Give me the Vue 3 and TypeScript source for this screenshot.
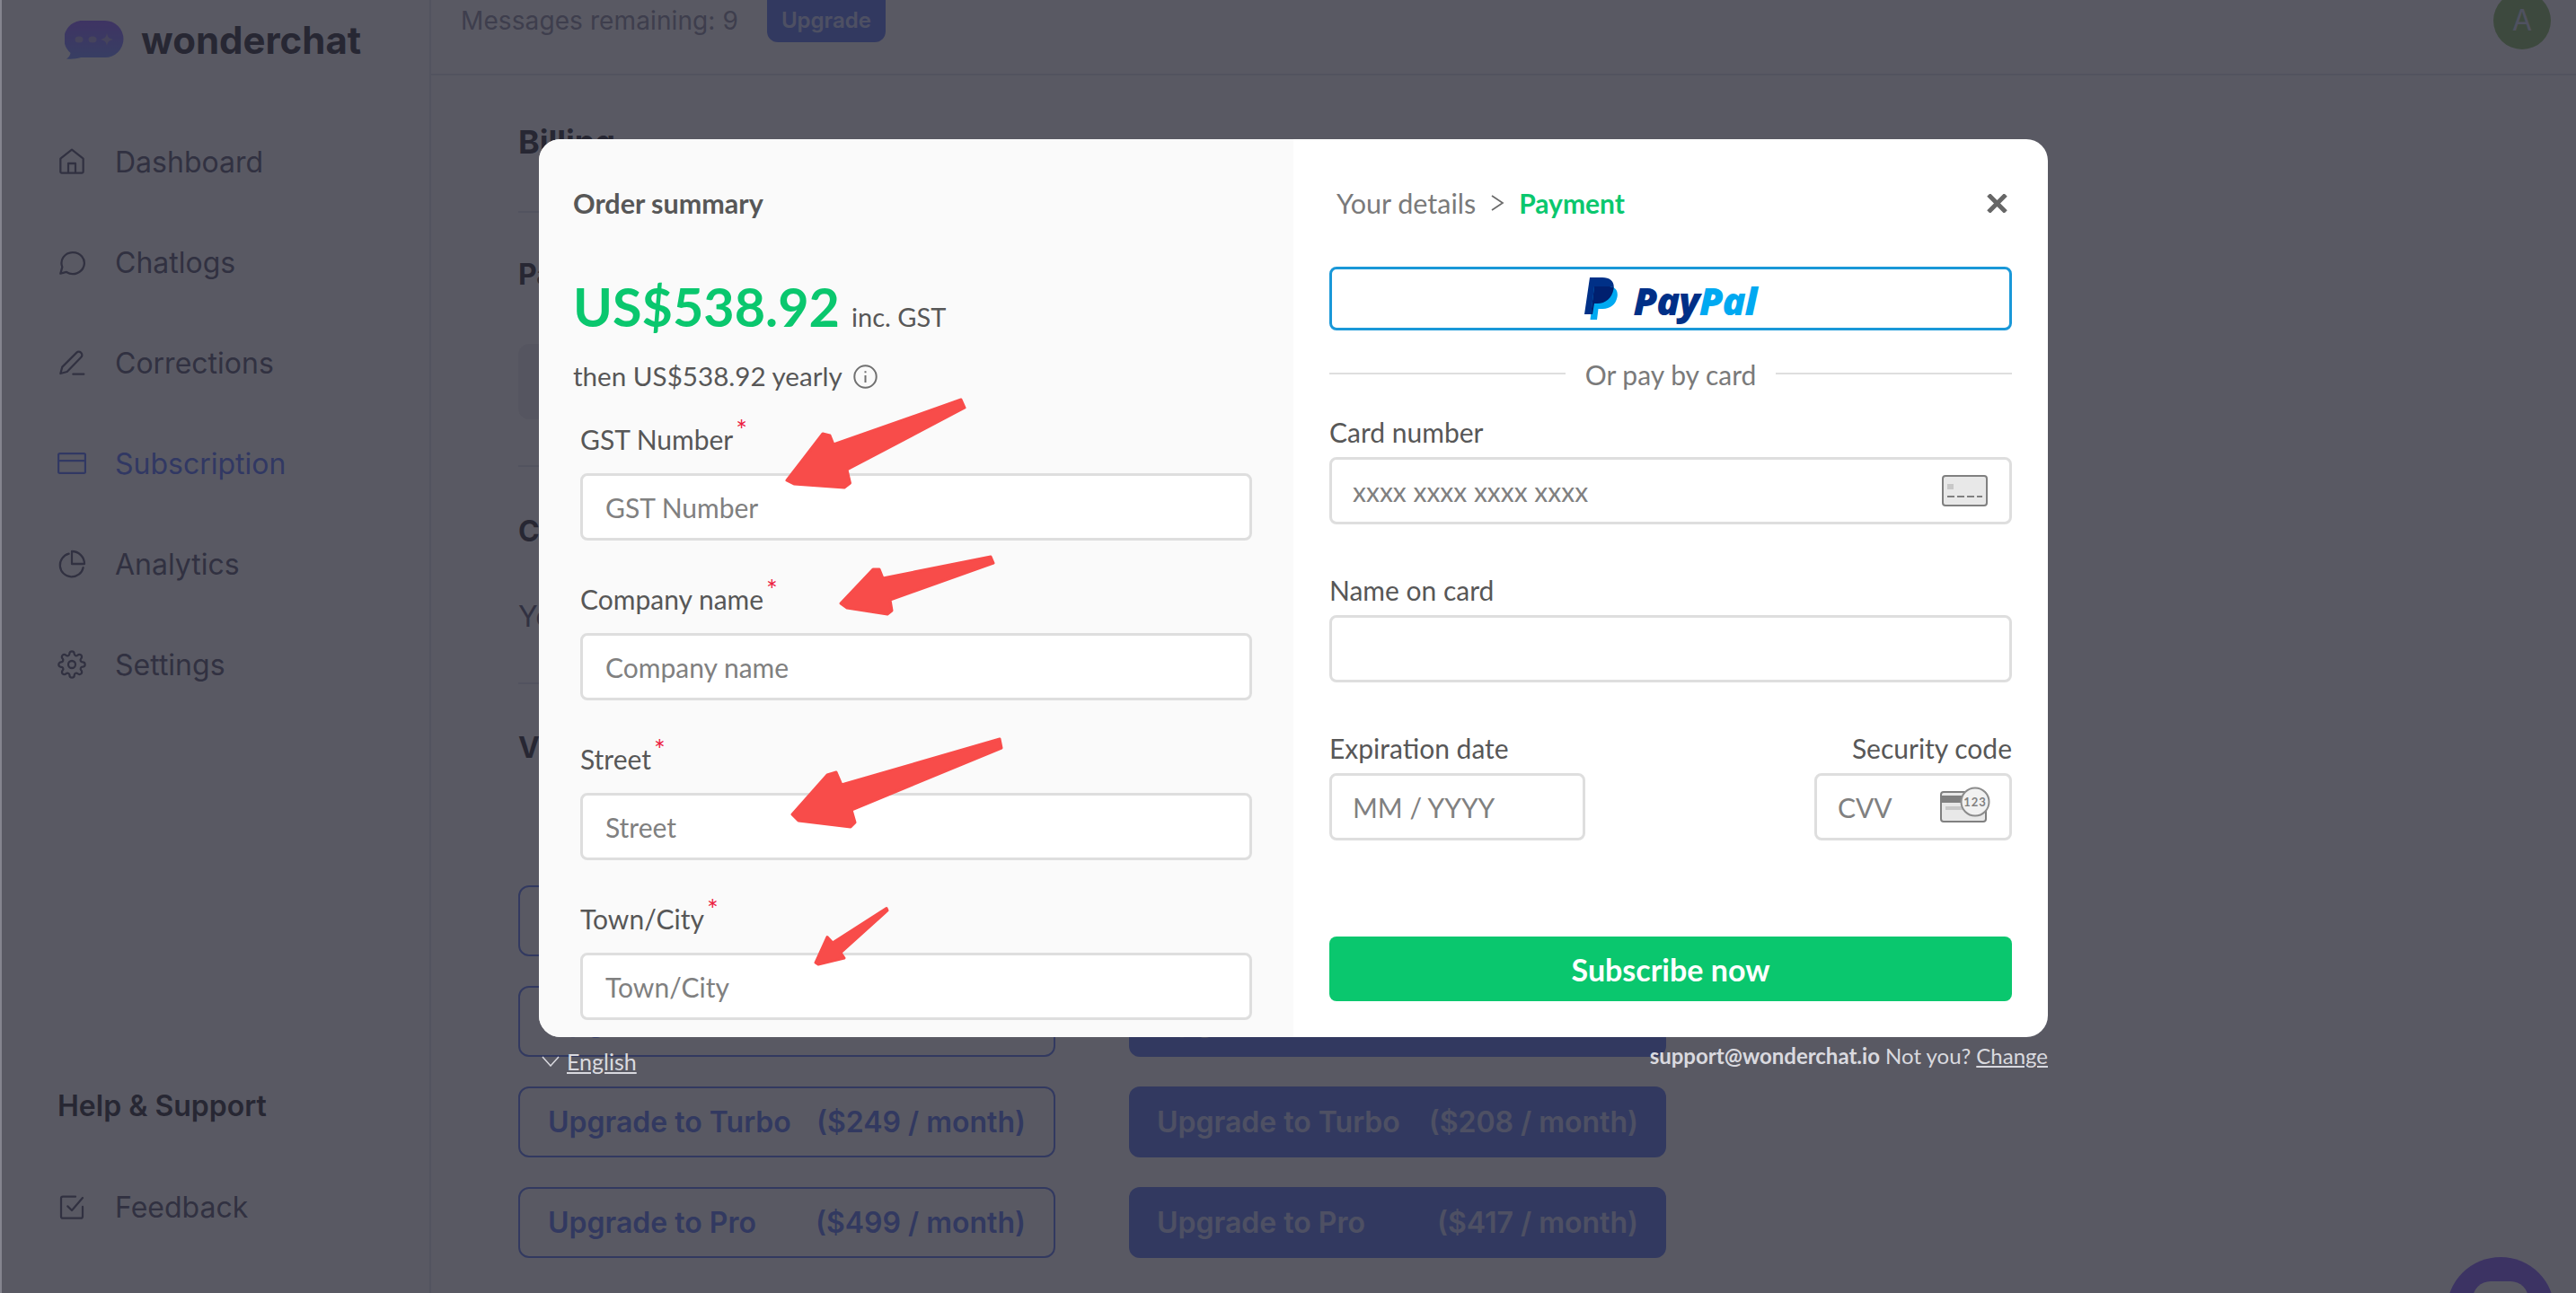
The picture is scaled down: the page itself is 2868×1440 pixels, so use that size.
<template>
  <div class="page">
    <aside class="sidebar">
      <div class="brand">
        <svg class="brand-mark" viewBox="0 0 66 43" width="66" height="43">
          <defs>
            <linearGradient id="brand-fill" x1="0" y1="0" x2="0" y2="1">
              <stop offset="0" stop-color="#a681ff" />
              <stop offset="1" stop-color="#8ea6ff" />
            </linearGradient>
          </defs>
          <path
            d="M22 0h23a20.5 20.5 0 0 1 0 41H18c-5 1.500-10 2-16 1.500 2.500-1.500 4-3.500 4.500-6.500A20.500 20.500 0 0 1 22 0z"
            fill="url(#brand-fill)"
          />
          <ellipse cx="16" cy="21" rx="4.500" ry="3.500" fill="#c0b8e6" />
          <ellipse cx="31" cy="21" rx="4.500" ry="3.500" fill="#c0b8e6" />
          <path d="M47 14c.8 4.500 2.500 6 7 7-4.500 1-6.200 2.500-7 7-.8-4.500-2.500-6-7-7 4.500-1 6.200-2.500 7-7z" fill="#c0b8e6" />
        </svg>
        <span class="brand-name">wonderchat</span>
      </div>

      <nav class="nav">
        <a v-for="item in navItems" :key="item.label" class="nav-item" :class="{ active: item.active }">
          <svg class="nav-icon" viewBox="0 0 24 24" width="32" height="32">
            <path :d="item.icon" />
            <circle v-if="item.label === 'Settings'" cx="12" cy="12" r="3" />
          </svg>
          <span>{{ item.label }}</span>
        </a>
      </nav>

      <div class="help">
        <h3>Help &amp; Support</h3>
        <a class="nav-item">
          <svg class="nav-icon" viewBox="0 0 24 24" width="32" height="32">
            <path d="M21 12v8a1.500 1.500 0 0 1-1.500 1.500h-15A1.500 1.500 0 0 1 3 20V5a1.500 1.500 0 0 1 1.500-1.500H15M8.500 11.500l3.500 3.500L21 4.500" />
          </svg>
          <span>Feedback</span>
        </a>
      </div>
    </aside>

    <div class="content">
      <header class="topbar">
        <span class="messages">Messages remaining: 9</span>
        <span class="upgrade-badge">Upgrade</span>
        <span class="avatar">A</span>
      </header>

      <main class="main">
        <h1 class="billing-title">Billing</h1>
        <hr class="billing-rule" />
        <h2 class="section-title">Payment method</h2>
        <div class="method-box"></div>
        <hr class="billing-rule method-rule" />
        <h2 class="section-title plan-title">Current plan</h2>
        <p class="plan-text">You are on the free plan</p>
        <hr class="billing-rule plan-rule" />
        <h2 class="section-title view-title">View plans</h2>

        <div class="plans">
          <template v-for="plan in plans" :key="plan.name">
            <button class="plan-button outline" type="button">
              <span>Upgrade to {{ plan.name }}</span><span>(${{ plan.monthly }} / month)</span>
            </button>
            <button class="plan-button solid" type="button">
              <span>Upgrade to {{ plan.name }}</span><span>(${{ plan.yearly }} / month)</span>
            </button>
          </template>
        </div>
      </main>
    </div>

    <div class="chat-launcher"><span class="chat-hole"></span></div>

    <div class="backdrop">
      <div class="checkout">
        <section class="modal">
          <div class="summary">
            <h2 class="summary-title">Order summary</h2>
            <div class="price-row">
              <span class="price">US$538.92</span>
              <span class="tax">inc. GST</span>
            </div>
            <p class="then-line">
              then US$538.92 yearly
              <svg class="info-icon" viewBox="0 0 27 27" width="27" height="27">
                <circle cx="13.500" cy="13.500" r="12.200" />
                <path d="M13.500 12v8M13.500 7.200v2" />
              </svg>
            </p>

            <div class="billing-fields">
              <label v-for="field in billingFields" :key="field" class="billing-field">
                <span class="field-label">{{ field }}<sup class="required">*</sup></span>
                <input class="text-input" type="text" :placeholder="field" />
              </label>
            </div>
          </div>

          <div class="payment">
            <div class="steps">
              <span class="step-done">Your details</span>
              <svg class="step-arrow" viewBox="0 0 16 18" width="16" height="18"><path d="M2 1l12 8-12 8" /></svg>
              <span class="step-current">Payment</span>
              <svg class="close" viewBox="0 0 23 21" width="23" height="21"><path d="M2 1l19 19M21 1L2 20" /></svg>
            </div>

            <button class="paypal" type="button">
              <svg viewBox="0 0 37 47" width="37" height="47">
                <defs>
                  <clipPath id="pp-back"><path :d="paypalBack" /></clipPath>
                </defs>
                <path :d="paypalBack" fill="#003087" />
                <path :d="paypalFront" fill="#00a9f1" />
                <path :d="paypalFront" fill="#00206f" clip-path="url(#pp-back)" />
              </svg>
              <span class="paypal-word"><span class="pay">Pay</span><span class="pal">Pal</span></span>
            </button>

            <div class="or-divider"><span>Or pay by card</span></div>

            <label class="card-field">
              <span class="field-label">Card number</span>
              <span class="input-wrap">
                <input class="text-input" type="text" placeholder="xxxx xxxx xxxx xxxx" />
                <svg class="card-icon" viewBox="0 0 51 35" width="51" height="35">
                  <rect x="1" y="1" width="49" height="33" rx="3" fill="#e8e8e8" stroke="#808080" stroke-width="2" />
                  <rect x="6" y="10" width="7" height="6" fill="#c8c8c8" />
                  <path d="M6 24h39" stroke="#808080" stroke-width="2" stroke-dasharray="8 3" />
                </svg>
              </span>
            </label>

            <label class="card-field">
              <span class="field-label">Name on card</span>
              <input class="text-input" type="text" />
            </label>

            <div class="card-row">
              <label class="card-field expiry">
                <span class="field-label">Expiration date</span>
                <input class="text-input" type="text" placeholder="MM / YYYY" />
              </label>
              <label class="card-field security">
                <span class="field-label">Security code</span>
                <span class="input-wrap">
                  <input class="text-input" type="text" placeholder="CVV" />
                  <svg class="cvv-icon" viewBox="0 0 56 40" width="56" height="40">
                    <rect x="1" y="6" width="50" height="33" rx="3" fill="#e8e8e8" stroke="#808080" stroke-width="2" />
                    <rect x="1" y="10" width="50" height="8" fill="#808080" />
                    <rect x="6" y="22" width="26" height="4" fill="#c8c8c8" />
                    <circle cx="39" cy="17" r="15.500" fill="#f1f1f1" stroke="#8c8c8c" stroke-width="2" />
                    <text x="39" y="21.500" text-anchor="middle" class="cvv-digits">123</text>
                  </svg>
                </span>
              </label>
            </div>

            <button class="subscribe" type="button">Subscribe now</button>
          </div>

          <svg class="annotations" viewBox="0 0 1680 1000" width="1680" height="1000">
            <polygon v-for="(arrow, i) in arrows" :key="i" :points="arrow" />
          </svg>
        </section>

        <div class="modal-footer">
          <span class="language">
            <svg viewBox="0 0 20 12" width="20" height="12"><path d="M1 1l9 10 9-10" /></svg>
            <u>English</u>
          </span>
          <span class="account"><b>support@wonderchat.io</b> Not you? <u>Change</u></span>
        </div>
      </div>
    </div>
  </div>
</template>

<script setup lang="ts">
const navItems = [
  { label: 'Dashboard', icon: 'M2.500 9.500 12 2l9.500 7.500v11a1 1 0 0 1-1 1h-17a1 1 0 0 1-1-1zM9 21.500v-8h6v8' },
  { label: 'Chatlogs', icon: 'M2.500 21.500l1.500-5.500A9.500 9 0 1 1 7.500 20.200z' },
  { label: 'Corrections', icon: 'M2.500 21l1.500-5.500L16 3.500a2.500 2.500 0 0 1 3.500 0l.3.300a2.500 2.500 0 0 1 0 3.500L8 19.500zM13 21.500h9' },
  { label: 'Subscription', icon: 'M1.800 3.800h20.400a1 1 0 0 1 1 1v14.400a1 1 0 0 1-1 1H1.800a1 1 0 0 1-1-1V4.800a1 1 0 0 1 1-1zM.8 9.800h22.400', active: true },
  { label: 'Analytics', icon: 'M9.500 3.500A9.800 9.800 0 1 0 21.500 15M12 1.500V12h10.500A10.500 10.500 0 0 0 12 1.500z' },
  {
    label: 'Settings',
    icon: 'M19.400 15a1.650 1.650 0 0 0 .33 1.820l.06.06a2 2 0 0 1 0 2.830 2 2 0 0 1-2.830 0l-.06-.06a1.650 1.650 0 0 0-1.820-.33 1.650 1.650 0 0 0-1 1.510V21a2 2 0 0 1-2 2 2 2 0 0 1-2-2v-.09A1.650 1.650 0 0 0 9 19.400a1.650 1.650 0 0 0-1.820.33l-.06.06a2 2 0 0 1-2.830 0 2 2 0 0 1 0-2.830l.06-.06a1.650 1.650 0 0 0 .33-1.820 1.650 1.650 0 0 0-1.510-1H3a2 2 0 0 1-2-2 2 2 0 0 1 2-2h.09A1.650 1.650 0 0 0 4.600 9a1.650 1.650 0 0 0-.33-1.820l-.06-.06a2 2 0 0 1 0-2.830 2 2 0 0 1 2.830 0l.06.06a1.650 1.650 0 0 0 1.820.33H9a1.650 1.650 0 0 0 1-1.510V3a2 2 0 0 1 2-2 2 2 0 0 1 2 2v.09a1.650 1.650 0 0 0 1 1.510 1.650 1.650 0 0 0 1.820-.33l.06-.06a2 2 0 0 1 2.830 0 2 2 0 0 1 0 2.830l-.06.06a1.650 1.650 0 0 0-.33 1.820V9a1.650 1.650 0 0 0 1.510 1H21a2 2 0 0 1 2 2 2 2 0 0 1-2 2h-.09a1.650 1.650 0 0 0-1.510 1z',
  },
];

const plans = [
  { name: 'Basic', monthly: 49, yearly: 41 },
  { name: 'Growth', monthly: 99, yearly: 83 },
  { name: 'Turbo', monthly: 249, yearly: 208 },
  { name: 'Pro', monthly: 499, yearly: 417 },
];

const billingFields = ['GST Number', 'Company name', 'Street', 'Town/City'];

const paypalBack = 'M6 0h14c9 0 14 5 12.500 13-1.800 10-9 16-18 16H11L9 41H0z';
const paypalFront = 'M11 10h15c8 0 12 4 10.500 12-1.500 8-8 13-16 13H15.500L14 47H6.500z';

// red hand-drawn arrows, in modal coordinates
const arrows = [
  '470,290 474,299 343,368 346.500,383 340,388 284,384 276,380 316,328 324,330 328,340',
  '503,465 506,472 391,513 393,525 388,529 343,522 336,517 372,479 379,479 383,489',
  '513,668 515,678 348,747 352,761 347,766 289,759 282,752 321,708 331,705 337,719',
  '387,856.500 388,859 336,906 340,912 311,919 308,917 321,888.500 327,895',
];
</script>

<style>
html,
body {
  margin: 0;
  overflow: hidden;
  background: #fff;
}
</style>

<style scoped>
.page {
  position: relative;
  display: flex;
  width: 2868px;
  height: 1440px;
  overflow: hidden;
  font-family: Inter, 'Noto Sans', sans-serif;
  color: #7a7a8c;
  background: #fff;
}

.sidebar {
  box-sizing: border-box;
  width: 480px;
  flex: none;
  display: flex;
  flex-direction: column;
  padding: 0 0 40px 64px;
  border-right: 2px solid #e8ebf0;
}

.brand {
  display: flex;
  align-items: center;
  height: 124px;
  margin-left: 8px;
  padding-bottom: 36px;
  box-sizing: border-box;
  gap: 19px;
}

.brand-mark {
  flex: none;
}

.brand-name {
  font-size: 42px;
  font-weight: 700;
  color: #595960;
}

.nav {
  display: flex;
  flex-direction: column;
}

.nav-item {
  display: flex;
  align-items: center;
  height: 112px;
  gap: 32px;
  font-size: 32px;
}

.nav-item.active {
  color: #7a92ff;
}

.nav-icon {
  flex: none;
  fill: none;
  stroke: currentColor;
  stroke-width: 1.700;
  stroke-linecap: round;
  stroke-linejoin: round;
}

.help {
  margin-top: auto;
}

.help h3 {
  margin: 0 0 28px;
  font-size: 32px;
  line-height: 56px;
  font-weight: 600;
  color: #595960;
}

.content {
  flex: 1;
  min-width: 0;
  display: flex;
  flex-direction: column;
}

.topbar {
  box-sizing: border-box;
  flex: none;
  display: flex;
  align-items: flex-start;
  height: 84px;
  padding: 0 28px 0 33px;
  border-bottom: 2px solid #e8ebf0;
}

.messages {
  font-size: 28px;
  line-height: 46px;
  letter-spacing: 0.1px;
  color: #a4a4b4;
}

.upgrade-badge {
  margin-left: 32px;
  height: 47px;
  padding: 0 16px;
  border-radius: 0 0 12px 12px;
  background: #7d95f3;
  color: #dbe2ff;
  font-size: 24px;
  font-weight: 600;
  line-height: 46px;
}

.avatar {
  margin: -9px 0 0 auto;
  width: 64px;
  height: 64px;
  border-radius: 50%;
  background: #a2ca82;
  color: #dee5f3;
  font-size: 32px;
  line-height: 64px;
  text-align: center;
}

.main {
  padding: 0 0 0 97px;
}

.billing-title {
  margin: 52px 0 0;
  font-size: 36px;
  line-height: 44px;
  font-weight: 700;
  color: #595960;
}

.billing-rule {
  margin: 0;
  width: 1400px;
  height: 2px;
  border: 0;
  background: #e8ebf0;
}

.billing-title + .billing-rule {
  margin-top: 55px;
}

.section-title {
  margin: 47px 0 0;
  font-size: 32px;
  line-height: 44px;
  font-weight: 700;
  color: #595960;
}

.method-box {
  width: 900px;
  height: 84px;
  margin-top: 55px;
  border-radius: 12px;
  background: #f2f2f3;
}

.method-rule {
  margin-top: 51px;
}

.plan-title {
  margin-top: 50px;
}

.plan-text {
  margin: 51px 0 0;
  font-size: 32px;
  line-height: 44px;
  color: #7a7a8c;
}

.plan-rule {
  margin-top: 51px;
}

.view-title {
  margin-top: 49px;
}

.plans {
  display: grid;
  grid-template-columns: 598px 598px;
  column-gap: 82px;
  row-gap: 33px;
  margin-top: 131px;
}

.plan-button {
  box-sizing: border-box;
  display: flex;
  justify-content: space-between;
  align-items: center;
  height: 79px;
  padding: 0 31px;
  border-radius: 12px;
  font-family: inherit;
  font-size: 32px;
  font-weight: 600;
  white-space: nowrap;
}

.plan-button.outline {
  border: 2px solid #7d95f3;
  background: #fff;
  color: #7d95f3;
}

.plan-button.solid {
  border: 0;
  background: #7d95f3;
  color: #dbe2ff;
}

.chat-launcher {
  position: absolute;
  left: 2724px;
  top: 1400px;
  width: 120px;
  height: 120px;
  border-radius: 50%;
  background: #9f80ff;
}

.chat-hole {
  position: absolute;
  left: 29px;
  top: 27px;
  width: 62px;
  height: 62px;
  border-radius: 20px;
  background: #fff;
}

.backdrop {
  box-sizing: border-box;
  position: absolute;
  inset: 0;
  padding: 155px 0 0 598px;
  border-left: 2px solid #85858f;
  background: rgba(19, 19, 33, 0.7);
}

.checkout {
  width: 1680px;
  font-family: Lato, 'Open Sans', sans-serif;
}

.modal {
  position: relative;
  display: flex;
  height: 1000px;
  overflow: hidden;
  border-radius: 24px;
  background: #fff;
}

.summary {
  box-sizing: border-box;
  width: 840px;
  flex: none;
  padding: 51px 46px 0 38px;
  background: #fafafa;
}

.summary-title {
  margin: 0;
  font-size: 30.500px;
  line-height: 40px;
  font-weight: 700;
  color: #575757;
}

.price-row {
  display: flex;
  align-items: baseline;
  gap: 13px;
  margin-top: 59px;
  line-height: 72px;
}

.price {
  font-size: 59.300px;
  font-weight: 700;
  color: #0ac76e;
}

.tax {
  font-size: 29px;
  color: #575757;
}

.then-line {
  display: flex;
  align-items: center;
  gap: 12px;
  margin: 10px 0 0;
  font-size: 29.600px;
  line-height: 40px;
  color: #575757;
}

.info-icon {
  fill: none;
  stroke: #707070;
  stroke-width: 2;
}

.billing-fields {
  display: flex;
  flex-direction: column;
  gap: 47px;
  margin: 32px 0 0 8px;
}

.billing-field {
  display: flex;
  flex-direction: column;
  gap: 20px;
}

.field-label {
  font-size: 30px;
  line-height: 36px;
  color: #575757;
}

.required {
  margin-left: 3px;
  font-size: 30px;
  line-height: 0;
  color: #ec1c3f;
}

.text-input {
  box-sizing: border-box;
  width: 100%;
  height: 75px;
  padding: 0 25px;
  border: 3px solid #dedede;
  border-radius: 8px;
  background: #fff;
  font-family: inherit;
  font-size: 30px;
  color: #575757;
  outline: none;
}

.text-input::placeholder {
  color: #808080;
  opacity: 1;
}

.payment {
  box-sizing: border-box;
  width: 840px;
  flex: none;
  padding: 51px 40px 0;
}

.payment .text-input {
  padding: 0 23px;
}

.steps {
  display: flex;
  align-items: center;
  height: 40px;
  padding-left: 8px;
  font-size: 30.500px;
}

.step-done {
  color: #7a7a7a;
}

.step-arrow {
  margin: 0 16px;
  fill: none;
  stroke: #6a6a6a;
  stroke-width: 1.700;
}

.step-current {
  font-size: 30px;
  font-weight: 700;
  color: #0ac76e;
}

.close {
  margin: 0 5px 0 auto;
  fill: none;
  stroke: #666;
  stroke-width: 5;
}

.paypal {
  box-sizing: border-box;
  display: flex;
  justify-content: center;
  align-items: flex-start;
  gap: 17px;
  width: 100%;
  height: 71px;
  margin-top: 51px;
  padding: 9px 0 0;
  border: 3px solid #1a98d8;
  border-radius: 8px;
  background: #fff;
}

.paypal-word {
  font-family: 'Open Sans', sans-serif;
  font-size: 43px;
  font-weight: 800;
  font-style: italic;
  line-height: 52px;
  letter-spacing: -1px;
}

.pay {
  color: #003087;
}

.pal {
  color: #00a9f1;
}

.or-divider {
  display: flex;
  align-items: center;
  gap: 22px;
  height: 40px;
  margin-top: 29px;
  font-size: 30px;
  color: #7a7a7a;
}

.or-divider::before,
.or-divider::after {
  content: '';
  flex: 1;
  height: 2px;
  background: #dedede;
  transform: translateY(-1px);
}

.card-field {
  display: flex;
  flex-direction: column;
  gap: 10px;
  margin-top: 26px;
}

.card-field + .card-field {
  margin-top: 55px;
}

.input-wrap {
  position: relative;
  display: block;
}

.card-icon {
  position: absolute;
  right: 27px;
  top: 20px;
}

.card-row {
  display: flex;
  justify-content: space-between;
  margin-top: 55px;
}

.card-row .card-field {
  margin-top: 0;
}

.expiry {
  width: 285px;
}

.security {
  width: 220px;
  align-items: flex-end;
}

.security .input-wrap {
  width: 100%;
}

.cvv-icon {
  position: absolute;
  right: 24px;
  top: 15px;
}

.cvv-digits {
  font-family: Lato, sans-serif;
  font-size: 13px;
  font-weight: 700;
  letter-spacing: 1px;
  fill: #808080;
}

.subscribe {
  width: 100%;
  height: 72px;
  margin-top: 107px;
  border: 0;
  border-radius: 8px;
  background: #0ac76e;
  color: #fff;
  font-family: inherit;
  font-size: 34px;
  font-weight: 700;
}

.annotations {
  position: absolute;
  left: 0;
  top: 0;
  pointer-events: none;
}

.annotations polygon {
  fill: #f84c4a;
  stroke: #f84c4a;
  stroke-width: 3;
  stroke-linejoin: round;
}

.modal-footer {
  display: flex;
  justify-content: space-between;
  align-items: flex-start;
  padding: 6px 0 0 3px;
  font-size: 25px;
  line-height: 30px;
  color: #d9d9df;
}

.language {
  display: flex;
  align-items: center;
  gap: 8px;
  margin-top: 6px;
}

.language svg {
  fill: none;
  stroke: #d9d9df;
  stroke-width: 1.500;
}

.account {
  font-size: 24px;
}

.account b {
  font-weight: 700;
}
</style>
